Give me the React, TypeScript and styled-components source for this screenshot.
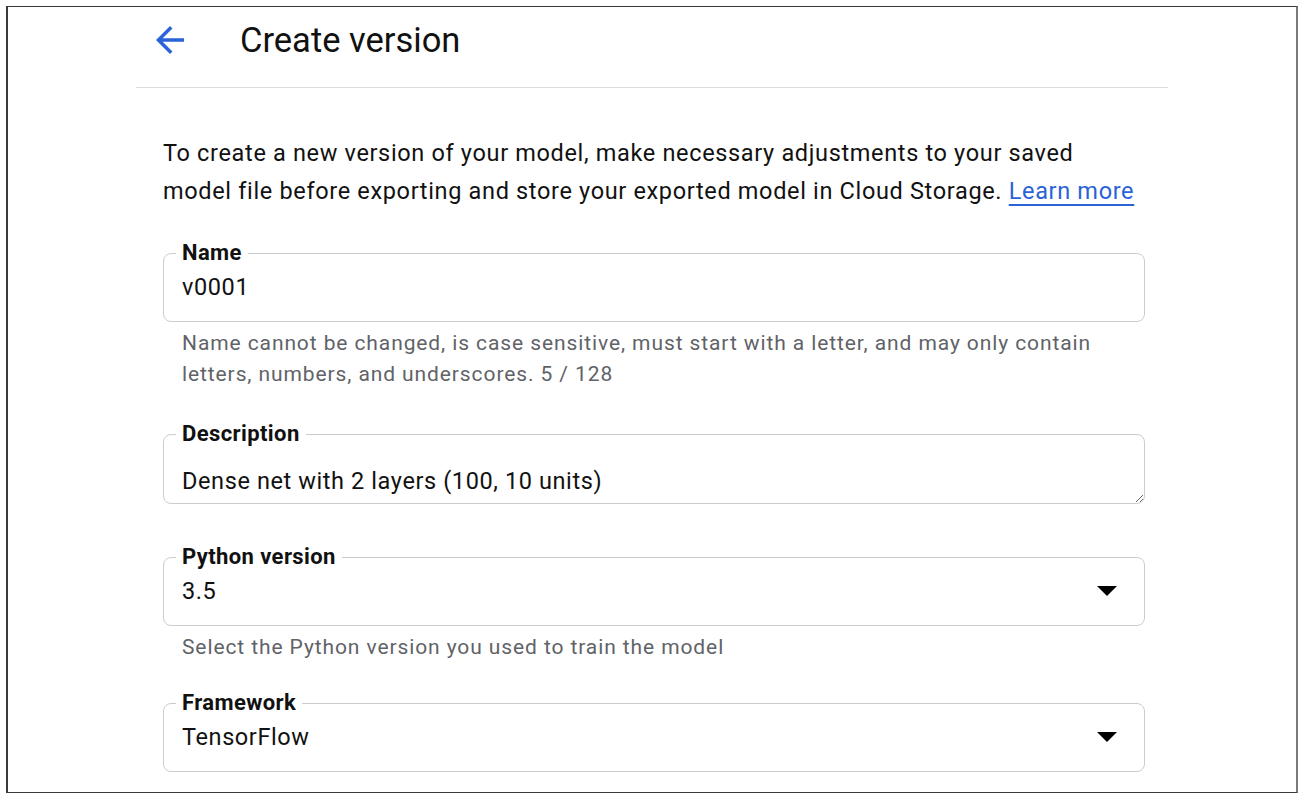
import React from "react";
import styled, { createGlobalStyle } from "styled-components";

const Global = createGlobalStyle`
  html, body { margin: 0; padding: 0; background: #fff; }
  body { padding: 6px; font-family: Roboto, "Liberation Sans", Arial, sans-serif; color: #202124; }
  * { box-sizing: border-box; }
`;

const Frame = styled.div`
  width: 1292px;
  height: 787px;
  border: 1px solid #3a3a3a;
  border-left-width: 2px;
  border-right: 2px solid #7a7a7a;
  overflow: hidden;
  background: #fff;
`;

const Column = styled.div`
  width: 1032px;
  margin: 0 auto;
`;

const Header = styled.header`
  height: 81px;
  display: flex;
  align-items: flex-start;
  gap: 49px;
  padding: 12px 0 0 13px;
  border-bottom: 1px solid #dadce0;
`;

const BackButton = styled.button`
  width: 42px;
  height: 42px;
  padding: 0;
  border: none;
  background: none;
  color: #2a62d8;
  display: flex;
  align-items: center;
  justify-content: center;
  cursor: pointer;
`;

const Title = styled.h1`
  margin: 0;
  font-size: 34.5px;
  line-height: 42px;
  font-weight: 400;
  color: #111;
`;

const Body = styled.div`
  padding: 46px 23px 0 27px;
`;

const Intro = styled.p`
  margin: 0 0 31px;
  font-size: 23.5px;
  letter-spacing: 0.66px;
  line-height: 38px;
  white-space: nowrap;
  color: #111;
`;

const Link = styled.a`
  color: #2a62d8;
  text-decoration: underline;
  text-decoration-thickness: 2px;
  text-underline-offset: 5px;
`;

const Field = styled.fieldset<{ $gap: number }>`
  margin: 0 0 ${(p) => p.$gap}px;
  padding: 0 0 0 12px;
  border: 1.5px solid #cccccc;
  border-radius: 8px;
  min-width: 0;
`;

const Legend = styled.legend`
  padding: 0 6px;
  font-size: 22px;
  letter-spacing: 0.4px;
  line-height: 24px;
  font-weight: 700;
  color: #111;
`;

const valueText = `
  font-family: Roboto, "Liberation Sans", Arial, sans-serif;
  font-size: 23.5px;
  letter-spacing: 0.6px;
  line-height: 28px;
  color: #111;
`;

const TextInput = styled.input`
  display: block;
  width: 100%;
  height: 56px;
  padding: 8px 6px 20px;
  border: none;
  outline: none;
  background: transparent;
  ${valueText}
`;

const TextArea = styled.textarea`
  display: block;
  width: 100%;
  height: 57px;
  padding: 21px 6px 8px;
  border: none;
  outline: none;
  background: transparent;
  resize: vertical;
  overflow: hidden;
  ${valueText}
`;

const Select = styled.div`
  display: flex;
  align-items: center;
  justify-content: space-between;
  height: 56px;
  padding: 8px 27px 20px 6px;
  ${valueText}
`;

const Caret = styled.span`
  width: 0;
  height: 0;
  border-left: 10px solid transparent;
  border-right: 10px solid transparent;
  border-top: 10px solid #000;
`;

const Hint = styled.p<{ $gap: number }>`
  margin: 6px 0 ${(p) => p.$gap}px 19px;
  font-size: 21px;
  letter-spacing: 0.9px;
  line-height: 31px;
  white-space: nowrap;
  color: #5f6368;
`;

const ArrowBack = () => (
  <svg width="42" height="42" viewBox="0 0 24 24" fill="currentColor" aria-hidden="true">
    <path d="M20 11H7.83l5.59-5.59L12 4l-8 8 8 8 1.41-1.41L7.83 13H20v-2z" />
  </svg>
);

export default function App() {
  return (
    <>
      <Global />
      <Frame>
        <Column>
          <Header>
            <BackButton aria-label="Back">
              <ArrowBack />
            </BackButton>
            <Title>Create version</Title>
          </Header>
          <Body>
            <Intro>
              To create a new version of your model, make necessary adjustments to your saved
              <br />
              model file before exporting and store your exported model in Cloud Storage.{" "}
              <Link href="#">Learn more</Link>
            </Intro>

            <Field $gap={0}>
              <Legend>Name</Legend>
              <TextInput defaultValue="v0001" />
            </Field>
            <Hint $gap={32}>
              Name cannot be changed, is case sensitive, must start with a letter, and may only contain
              <br />
              letters, numbers, and underscores. 5 / 128
            </Hint>

            <Field $gap={41}>
              <Legend>Description</Legend>
              <TextArea defaultValue="Dense net with 2 layers (100, 10 units)" />
            </Field>

            <Field $gap={0}>
              <Legend>Python version</Legend>
              <Select>
                <span>3.5</span>
                <Caret />
              </Select>
            </Field>
            <Hint $gap={28}>Select the Python version you used to train the model</Hint>

            <Field $gap={0}>
              <Legend>Framework</Legend>
              <Select>
                <span>TensorFlow</span>
                <Caret />
              </Select>
            </Field>
          </Body>
        </Column>
      </Frame>
    </>
  );
}
